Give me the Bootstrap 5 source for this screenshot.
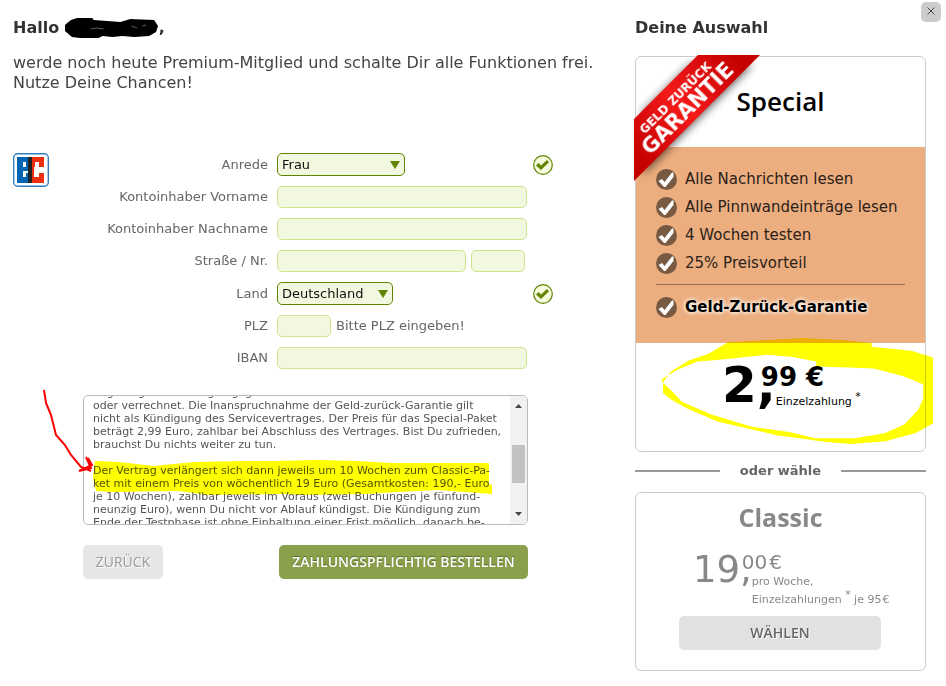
<!DOCTYPE html>
<html lang="de">
<head>
<meta charset="utf-8">
<meta name="viewport" content="width=device-width, initial-scale=1">
<title>Premium-Mitglied werden</title>
<link rel="stylesheet" href="https://cdn.jsdelivr.net/npm/bootstrap@5.3.0/dist/css/bootstrap.min.css">
<style>
body{font-family:"DejaVu Sans",Verdana,sans-serif;font-size:13px;line-height:20px;color:#666;background:#fff}
.page{padding:18px 20px 15px 13px;gap:20px}
.main-col{min-width:0}
.side{width:291px;flex:none}
.title-line{font-size:16px;line-height:20px;font-weight:700;color:#333}
.intro{font-size:16px;line-height:20px;color:#444;margin-top:15px}
.pay{margin-top:60px;gap:29px}
.rows{gap:10px;width:475px}
.form-row{gap:9px;min-height:22px}
.form-row>label{width:190px;text-align:right;flex:none}
.f{background:#f2f7df;border:1px solid #cfe58c;border-radius:5px;height:22px;padding:0 5px;min-width:0;color:#111;font-size:13px}
.f:focus{outline:1px solid #5f8500}
.wide{width:250px}.street{width:189px}.tiny{width:54px}
.pair{gap:5px}
.pick{position:relative}
.pick select{display:block;appearance:none;background:#f2f7df;border:1px solid #5f8500;border-radius:5px;height:23px;padding:0 24px 0 4px;font-size:13px;color:#111;width:100%}
.pick svg{position:absolute;right:5px;top:8px;pointer-events:none}
.anrede{width:128px}.land{width:116px}
.ok-cell{margin-left:auto}
.terms-wrap{position:relative;margin:26px 0 0 70px;width:445px}
.terms{height:130px;border:1px solid #bbb;border-radius:5px;overflow:hidden;font-size:11px;line-height:13px;color:#555}
.terms-text{flex:1;min-width:0;padding:0 0 0 9px;white-space:nowrap}
.terms-text p{margin:-10px 0 13px}
.terms-text p+p{margin:0}
.bar{width:17px;background:#f1f1f1;padding:7px 2px}
.thumb{height:38px;background:#c1c1c1;margin-top:37px}
.arrow-mark{position:absolute;left:-44px;top:-8px}
.hl{position:absolute;left:8px;top:64px;mix-blend-mode:multiply}
.actions{margin:20px 0 0 70px;width:445px}
.act{font-family:"Open Sans","Noto Sans",sans-serif;border:0;border-radius:5px;height:34px;padding:0;font-size:14px;line-height:34px}
.back{width:80px;background:#e6e6e6;color:#999;text-shadow:1px 1px #fff}
.order{width:249px;background:#8aa04a;color:#fff;font-weight:600;text-shadow:0 -1px 1px #56672a}
.close-x{position:absolute;right:5px;top:2px;width:20px;height:20px;background:#ccc;border:0;border-radius:5px;padding:0 0 2px;display:flex}
.close-x svg{margin:auto}
.offer{border:1px solid #ccc;border-radius:6px;background:#fff}
.special{position:relative;margin-top:18px;height:396px}
.offer-name{font-family:"Open Sans","Noto Sans",sans-serif;font-weight:600;font-size:26px;line-height:32px;text-align:center;margin:0}
.special .offer-name{padding-top:28px;height:90px;color:#000}
.ribbon{position:absolute;left:-2px;top:-2px}
.benefits{background:#ecae7f;height:196px;padding:18px 20px 0;color:#2b211a;font-size:15px;line-height:28px}
.benefits li{display:flex;gap:8px;align-items:center;white-space:nowrap}
.benefits ul+ul{border-top:1px solid #9a6f53;margin-top:7px;padding-top:8px}
.glow{color:#000;font-weight:700;text-shadow:0 0 4px #fff,0 0 5px #fff}
.price{color:#000;padding:17px 0 0 86px;white-space:nowrap}
.euro{font-size:50px;line-height:50px;font-weight:700}
.cents{font-size:26px;line-height:34px;font-weight:700;margin-left:-15px}
.note{font-size:11px;line-height:16px}
.note sup{font-size:11px;top:-5px}
.circle-mark{position:absolute;left:26px;top:281px;mix-blend-mode:multiply}
.divide{gap:20px;margin:9px 0 11px;font-weight:700;height:20px}
.divide i{height:2px;background:#999;flex:1}
.classic{color:#888;height:179px;padding-top:8px}
.classic .offer-name{font-weight:700;font-size:25px}
.classic .price{color:#888;padding:15px 0 0 57px}
.classic .euro{font-size:37px;line-height:44px;font-weight:400}
.classic .cents{font-size:20px;line-height:28px;font-weight:400;margin-left:-10px}
.classic .note{line-height:24px}
.classic .note:nth-child(2){line-height:12px}
.choose{display:block;width:202px;background:#e1e1e1;color:#666;margin:4px 0 0 43px;text-shadow:1px 1px #fff;font-weight:600}
.classic .choose:hover{background:#d8d8d8}
</style>
<script src="https://cdn.jsdelivr.net/npm/bootstrap@5.3.0/dist/js/bootstrap.bundle.min.js"></script>
</head>
<body>
<svg width="0" height="0" class="position-absolute" aria-hidden="true"><defs>
<symbol id="ok" viewBox="0 0 20 20"><circle cx="10" cy="10" r="9.3" fill="#f5fbdc" stroke="#5f8500" stroke-width="1.2"/><path d="M3 10.500 5.500 8l2.500 2.500 6-5.500 2 2.300L8 15Z" fill="#5f8500"/></symbol>
<symbol id="tick" viewBox="0 0 21 21"><circle cx="10.500" cy="10.500" r="10.500" fill="#785a43"/><path d="M2.500 12 6 10l2.500 3L16 3.500h1.500V8L9.500 18H8Z" fill="#fff"/></symbol>
</defs></svg>
<button class="close-x" type="button" aria-label="Schließen"><svg width="8" height="8" viewBox="0 0 8 8"><path d="m.5.5 7 7m0-7-7 7" stroke="#444" fill="none"/></svg></button>
<div class="page d-flex justify-content-between">
<main class="main-col flex-grow-1">
<h1 class="title-line mb-0 d-flex">Hallo&nbsp;<svg width="94" height="20" viewBox="0 1 95 20" aria-hidden="true"><path d="M1 7 6 3 15 0h12l2 3 27 2 10-3 24 1 4 6-2 6-7 4-15 1-12-1-10 1-10-1-4 2-12 1-15-2-7-6-3-3Z"/><path d="m26 12 6-1 7 1m28-3 6 2m5-2 4-1" stroke="#888" stroke-width=".7" fill="none"/></svg>,</h1>
<p class="intro mb-0">werde noch heute Premium-Mitglied und schalte Dir alle Funktionen frei.<br>Nutze Deine Chancen!</p>
<form>
<div class="pay d-flex align-items-start">
<svg width="36" height="34" viewBox="0 0 36 34" role="img" aria-label="Electronic Cash"><rect x=".7" y=".7" width="34.600" height="32.600" rx="4" fill="#fff" stroke="#2f7fc1" stroke-width="1.400"/><path d="M4 4h11v26H4Z" fill="#0065b3"/><path d="M15 4h4v26h-4Z" fill="#222"/><path d="M19 4h12v26H19Z" fill="#ea3010"/><path d="M10 9h3v5h-3Zm0 9h5v2h-2v4h-3Z" fill="#fff"/><path d="M22 9h4v5h5v6h-5v4h-5V14h1Z" fill="#fff"/></svg>
<div class="rows d-flex flex-column">
<div class="form-row d-flex align-items-center"><label for="anrede">Anrede</label><div class="pick anrede"><select id="anrede"><option>Frau</option></select><svg width="10" height="8"><path d="M0 0h10L5 8Z" fill="#5f8500"/></svg></div><svg class="ok-cell" width="20" height="20"><use href="#ok"/></svg></div>
<div class="form-row d-flex align-items-center"><label for="vor">Kontoinhaber Vorname</label><input class="f wide" id="vor"></div>
<div class="form-row d-flex align-items-center"><label for="nach">Kontoinhaber Nachname</label><input class="f wide" id="nach"></div>
<div class="form-row d-flex align-items-center"><label for="str">Straße / Nr.</label><div class="pair d-flex"><input class="f street" id="str"><input class="f tiny" aria-label="Nr."></div></div>
<div class="form-row d-flex align-items-center"><label for="land">Land</label><div class="pick land"><select id="land"><option>Deutschland</option></select><svg width="10" height="8"><path d="M0 0h10L5 8Z" fill="#5f8500"/></svg></div><svg class="ok-cell" width="20" height="20"><use href="#ok"/></svg></div>
<div class="form-row d-flex align-items-center"><label for="plz">PLZ</label><div class="pair d-flex align-items-center"><input class="f tiny" id="plz"><span>Bitte PLZ eingeben!</span></div></div>
<div class="form-row d-flex align-items-center"><label for="iban">IBAN</label><input class="f wide" id="iban"></div>
</div>
</div>
<div class="terms-wrap">
<div class="terms d-flex"><div class="terms-text">
<p>angefangene Zahlungen gegebenenfalls<br>oder verrechnet. Die Inanspruchnahme der Geld-zurück-Garantie gilt<br>nicht als Kündigung des Servicevertrages. Der Preis für das Special-Paket<br>beträgt 2,99 Euro, zahlbar bei Abschluss des Vertrages. Bist Du zufrieden,<br>brauchst Du nichts weiter zu tun.</p>
<p>Der Vertrag verlängert sich dann jeweils um 10 Wochen zum Classic-Pa-<br>ket mit einem Preis von wöchentlich 19 Euro (Gesamtkosten: 190,- Euro<br>je 10 Wochen), zahlbar jeweils im Voraus (zwei Buchungen je fünfund-<br>neunzig Euro), wenn Du nicht vor Ablauf kündigst. Die Kündigung zum<br>Ende der Testphase ist ohne Einhaltung einer Frist möglich, danach be-</p></div>
<div class="bar d-flex flex-column"><svg width="13" height="5"><path d="M3 5 6.500 1 10 5Z" fill="#444"/></svg><div class="thumb"></div><svg class="mt-auto" width="13" height="5"><path d="m3 0 3.500 4L10 0Z" fill="#444"/></svg></div></div>
<svg class="hl" width="402" height="36" viewBox="0 0 402 36" aria-hidden="true"><path d="m4 2 24 1 35 4 40-4 50-1h29l44-1 40 1 35 2h97v21l3 1v9l-14-1-40-3-40 2-30 2-65 1-20-1-75 1-30-4-64 1-18-1-3-14Z" fill="#ff0"/></svg>
<svg class="arrow-mark" width="60" height="85" viewBox="0 0 60 85" aria-hidden="true"><path d="m5 3 2 13 5 12 5 20 9 10 6 10 10 12 10 4M47 70l5 11-12 3 13-6-4-7" fill="none" stroke="#f00" stroke-width="2"/></svg>
</div>
<div class="actions d-flex justify-content-between"><button type="button" class="btn act back">ZURÜCK</button><button type="button" class="btn act order">ZAHLUNGSPFLICHTIG BESTELLEN</button></div>
</form>
</main>
<aside class="side">
<h2 class="title-line mb-0">Deine Auswahl</h2>
<section class="offer special">
<h3 class="offer-name">Special</h3>
<div class="benefits"><ul class="list-unstyled mb-0">
<li><svg width="21" height="21"><use href="#tick"/></svg>Alle Nachrichten lesen</li>
<li><svg width="21" height="21"><use href="#tick"/></svg>Alle Pinnwandeinträge lesen</li>
<li><svg width="21" height="21"><use href="#tick"/></svg>4 Wochen testen</li>
<li><svg width="21" height="21"><use href="#tick"/></svg>25% Preisvorteil</li></ul>
<ul class="list-unstyled mb-0"><li class="glow"><svg width="21" height="21"><use href="#tick"/></svg>Geld-Zurück-Garantie</li></ul></div>
<div class="price d-flex"><span class="euro">2,</span><div><div class="cents">99 €</div><div class="note">Einzelzahlung <sup>*</sup></div></div></div>
<svg class="ribbon" width="150" height="128" viewBox="0 0 150 128" role="img" aria-label="Geld zurück Garantie"><defs><linearGradient id="red" x1="0" y1="1" x2="1" y2="0"><stop offset=".1" stop-color="#c40000"/><stop offset=".5" stop-color="#f61a1a"/><stop offset=".9" stop-color="#c40000"/></linearGradient><filter id="sh" x="-20%" y="-20%" width="150%" height="150%"><feGaussianBlur stdDeviation="5"/></filter><clipPath id="in"><path d="M2 2h148v126H2Z"/></clipPath></defs><g clip-path="url(#in)"><path d="M8 56 56 8h62L8 118Z" transform="translate(1 1)" opacity=".65" filter="url(#sh)"/></g><path d="M0 64 64 0h62L0 126Z" fill="url(#red)"/><g fill="#fff" font-weight="700" text-anchor="middle" transform="rotate(-45 48 48)"><text x="47" y="44" font-size="12">GELD ZURÜCK</text><text x="48" y="63" font-size="21">GARANTIE</text></g></svg>
<svg class="circle-mark" width="271" height="110" viewBox="0 0 274 112" preserveAspectRatio="none" aria-hidden="true"><path fill="#ff0" fill-rule="evenodd" d="M1 56V45l8-11 18-11 20-7 20-12 40-2 35-2 40 2 30 3v4l40 4 35 11 8 8v23l-5 18-14 13-20 11-30 8-35 3-25-2-50-7-60-14-30-13-16-9ZM10 54l10 11 30 13 40 12 40 6 25 6h40l30-5 20-9 14-15 5-11V47l-20-8-30-8-25-1-33-1v-5l-25-5-25-2-45 5-25 2-20 8-18 11Z"/></svg>
</section>
<div class="divide d-flex align-items-center"><i></i><span>oder wähle</span><i></i></div>
<section class="offer classic"><h3 class="offer-name">Classic</h3>
<div class="price d-flex"><span class="euro">19,</span><div><div class="cents">00&#8202;€</div><div class="note">pro Woche,</div><div class="note">Einzelzahlungen <sup>*</sup> je 95&#8202;€</div></div></div>
<button type="button" class="btn act choose">WÄHLEN</button></section>
</aside>
</div>
</body>
</html>
